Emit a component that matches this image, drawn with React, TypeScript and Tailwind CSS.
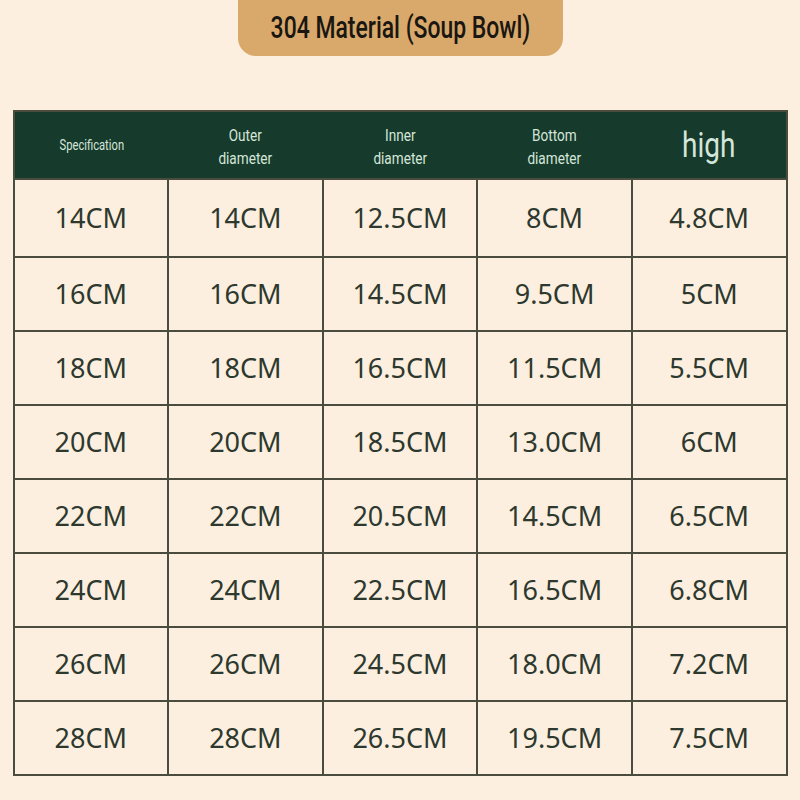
const headers = [
  { lines: ["Specification"], size: "text-[14px] -mt-[2px]" },
  { lines: ["Outer", "diameter"], size: "text-[17px] pt-[3px]" },
  { lines: ["Inner", "diameter"], size: "text-[17px] pt-[3px]" },
  { lines: ["Bottom", "diameter"], size: "text-[17px] pt-[3px]" },
  { lines: ["high"], size: "text-[35px]" },
];

const rows = [
  ["14CM", "14CM", "12.5CM", "8CM", "4.8CM"],
  ["16CM", "16CM", "14.5CM", "9.5CM", "5CM"],
  ["18CM", "18CM", "16.5CM", "11.5CM", "5.5CM"],
  ["20CM", "20CM", "18.5CM", "13.0CM", "6CM"],
  ["22CM", "22CM", "20.5CM", "14.5CM", "6.5CM"],
  ["24CM", "24CM", "22.5CM", "16.5CM", "6.8CM"],
  ["26CM", "26CM", "24.5CM", "18.0CM", "7.2CM"],
  ["28CM", "28CM", "26.5CM", "19.5CM", "7.5CM"],
];

export default function App() {
  return (
    <div className="w-[800px] h-[800px] bg-[#fcefdf] flex flex-col items-center overflow-hidden">
      <div className="w-[325px] h-[56px] bg-[#d9a96b] rounded-b-[18px] flex items-center justify-center">
        <span className="inline-block whitespace-nowrap scale-x-[0.74] text-[#1a1612] text-[31px] font-medium font-['Roboto',sans-serif]">
          304 Material (Soup Bowl)
        </span>
      </div>

      <table className="mt-[54px] w-[775px] border-collapse border-2 border-[#4a4c3e] table-fixed">
        <thead>
          <tr className="h-[68px] bg-[#163a2b]">
            {headers.map((h, i) => (
              <th
                key={i}
                className={`${h.size} font-normal text-[#d4e6da] leading-[23px] text-center align-middle font-['Roboto',sans-serif]`}
              >
                {h.lines.map((l) => (
                  <div key={l} className="scale-x-[0.8] whitespace-nowrap">
                    {l}
                  </div>
                ))}
              </th>
            ))}
          </tr>
        </thead>
        <tbody>
          {rows.map((r, ri) => (
            <tr key={ri} className={ri === 0 ? "h-[78px]" : "h-[74px]"}>
              {r.map((c, ci) => (
                <td
                  key={ci}
                  className="border-2 border-[#4a4c3e] text-center align-middle text-[27px] text-[#2d382e] font-['Noto_Sans',sans-serif]"
                >
                  {c}
                </td>
              ))}
            </tr>
          ))}
        </tbody>
      </table>
    </div>
  );
}
